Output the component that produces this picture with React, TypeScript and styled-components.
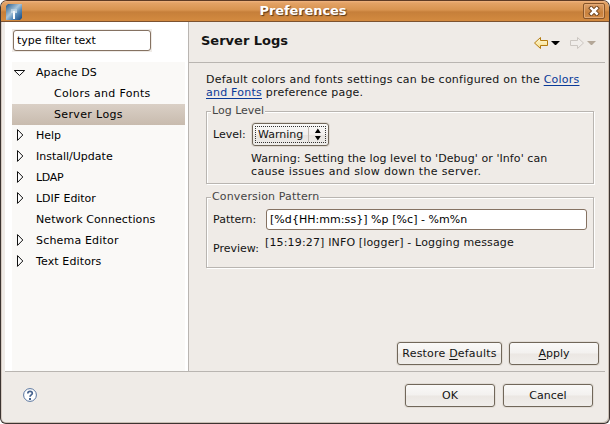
import React from "react";
import styled, { createGlobalStyle } from "styled-components";

const GlobalStyle = createGlobalStyle`
  *, *::before, *::after { box-sizing: border-box; }
  body { margin: 0; background: #fff; overflow: hidden; }
  button, input { font: inherit; color: inherit; }
`;

const Window = styled.div`
  width: 610px;
  height: 424px;
  display: flex;
  flex-direction: column;
  border: 1px solid #3c3431;
  border-top-color: #5e3b25;
  border-radius: 7px 7px 6px 6px;
  overflow: hidden;
  background: #efebe7;
  color: #141414;
  font: 11px/13px "DejaVu Sans", sans-serif;
  white-space: nowrap;
  box-shadow: inset -1px -1px #c9beb4, inset 1px 0 #d5cac2;
`;

const TitleBar = styled.header`
  height: 21px;
  flex: none;
  display: grid;
  grid-template-columns: 28px 1fr 28px;
  align-items: center;
  border-bottom: 1px solid #7c5230;
  background: linear-gradient(#f0b581 0, #e3a265 2px, #d8934f 9px, #c67f3a 11px, #d2893f 19px);
`;

const AppIcon = styled.svg`
  display: block;
  margin: 2px 0 0 5px;
`;

const WindowTitle = styled.h1`
  margin: 0;
  padding-right: 4px;
  text-align: center;
  font-size: 13px;
  line-height: 18px;
  font-weight: bold;
  letter-spacing: -0.1px;
  color: #fff;
  text-shadow: 1px 1px 1px #563719;
`;

const CloseButton = styled.button`
  width: 22px;
  height: 16px;
  margin-left: 2px;
  padding: 0;
  border: 1px solid #87552a;
  border-radius: 2px;
  background: linear-gradient(#dda16c, #c8813d 60%, #d38d4a);
  box-shadow: inset 0 0 0 1px #e3aa76;
  svg { display: block; margin: auto; }
`;

const Content = styled.div`
  height: 349px;
  flex: none;
  margin: 0 4px;
  display: grid;
  grid-template-columns: 183px 1fr;
`;

const Sidebar = styled.aside`
  background: #fff;
  padding: 7px 3px 0 7px;
  display: flex;
  flex-direction: column;
`;

const FilterFrame = styled.div`
  width: 140px;
  height: 23px;
  padding: 1px;
  background: #efebe7;
`;

const Field = styled.input<{ $tracking?: number }>`
  display: block;
  width: 100%;
  height: 21px;
  padding: 0 3px 1px;
  outline: 0;
  border: 1px solid #857262;
  border-radius: 3px;
  background: #fff;
  color: #000;
  letter-spacing: ${(p) => p.$tracking ?? 0}px;
`;

const Tree = styled.div`
  margin-top: 10px;
  flex: 1;
  background: #faf9f7;
`;

const TreeRow = styled.div<{ $selected?: boolean; $child?: boolean }>`
  height: 21px;
  display: grid;
  grid-template-columns: ${(p) => (p.$child ? 42 : 24)}px 1fr;
  align-items: center;
  color: #000;
  background: ${(p) => (p.$selected ? "linear-gradient(#dad0c6, #c8bbae)" : "none")};
  svg { display: block; }
`;

const Txt = styled.span<{ $tracking?: number }>`
  letter-spacing: ${(p) => p.$tracking ?? 0}px;
`;

const Page = styled.main`
  display: flex;
  flex-direction: column;
  border-left: 1px solid #b9b5b1;
`;

const PageHeader = styled.div`
  height: 41px;
  flex: none;
  display: flex;
  justify-content: space-between;
  padding: 11px 7px 0 12px;
  border-bottom: 1px solid #b9b5b1;
`;

const PageTitle = styled.h2`
  margin: 0;
  font-size: 13px;
  line-height: 16px;
  font-weight: bold;
`;

const Nav = styled.nav`
  width: 67px;
  height: 18px;
  svg { display: block; }
`;

const PageBody = styled.div`
  display: flex;
  flex-direction: column;
  padding: 10px 6px 0 17px;
`;

const Intro = styled.p`
  margin: 0;
  height: 38px;
`;

const Link = styled.a`
  color: #0a3a98;
  text-decoration: underline;
  text-underline-offset: 2px;
`;

const Group = styled.section<{ $height: number }>`
  width: 388px;
  height: ${(p) => p.$height}px;
  padding: 0 6px;
  border: 1px solid #b9b5b1;
  box-shadow: inset 1px 1px #fff, 1px 1px #fff;
  & + & { margin-top: 13px; }
`;

const GroupTitle = styled.h3<{ $tracking?: number }>`
  width: max-content;
  height: 13px;
  margin: -8px 0 0 -2px;
  padding: 0 1px;
  font-size: 11px;
  line-height: 13px;
  font-weight: normal;
  letter-spacing: ${(p) => p.$tracking ?? 0}px;
  color: #454545;
  background: #efebe7;
`;

const FormRow = styled.div<{ $label: number; $top: number }>`
  display: grid;
  grid-template-columns: ${(p) => p.$label}px 1fr;
  align-items: center;
  margin-top: ${(p) => p.$top}px;
`;

const Combo = styled.button`
  width: 77px;
  height: 23px;
  padding: 2px;
  border: 1px solid #71675a;
  border-radius: 3px;
  background: linear-gradient(#faf9f8, #f2efed 50%, #e8e4e0 52%, #efedea);
  box-shadow: 0 0 0 1px #dfd9d2;
`;

const ComboFocus = styled.span`
  height: 17px;
  display: flex;
  align-items: center;
  border: 1px dotted #333;
  padding-left: 2px;
`;

const ComboValue = styled.span`
  width: 52px;
  height: 15px;
  line-height: 15px;
  text-align: left;
  border-right: 1px solid #c2bbb4;
`;

const Note = styled.p`
  margin: 6px 0 0 38px;
`;

const Preview = styled.div`
  display: grid;
  grid-template-columns: 52px 1fr;
  margin-top: 6px;
  & > :first-child { padding-top: 6px; }
`;

const Actions = styled.div<{ $top: number }>`
  display: flex;
  justify-content: flex-end;
  gap: ${(p) => (p.$top ? 7 : 8)}px;
  margin-top: ${(p) => p.$top}px;
`;

const Button = styled.button<{ $width: number; $tracking?: number }>`
  width: ${(p) => p.$width}px;
  height: 23px;
  padding: 0 0 1px;
  border: 1px solid #71675a;
  border-radius: 3px;
  background: linear-gradient(#faf9f8, #f3f1ef 48%, #ebe7e3 52%, #f0eeeb);
  box-shadow: 0 0 0 1px #e2ddd7;
  letter-spacing: ${(p) => p.$tracking ?? 0}px;
  u { text-underline-offset: 2px; }
`;

const Footer = styled.footer`
  flex: 1;
  margin: 0 4px;
  padding: 12px 12px 0 18px;
  display: flex;
  justify-content: space-between;
  align-items: flex-start;
  border-top: 1px solid #b9b5b1;
  & > svg { margin-top: 4px; }
`;

type TreeItem = { label: string; kind: "open" | "closed" | "leaf"; child?: boolean; selected?: boolean; tracking?: number };

const items: TreeItem[] = [
  { label: "Apache DS", kind: "open", tracking: 0.1 },
  { label: "Colors and Fonts", kind: "leaf", child: true, tracking: 0.3 },
  { label: "Server Logs", kind: "leaf", child: true, selected: true, tracking: 0.36 },
  { label: "Help", kind: "closed" },
  { label: "Install/Update", kind: "closed" },
  { label: "LDAP", kind: "closed", tracking: -0.3 },
  { label: "LDIF Editor", kind: "closed", tracking: -0.04 },
  { label: "Network Connections", kind: "leaf", tracking: 0.1 },
  { label: "Schema Editor", kind: "closed", tracking: 0.18 },
  { label: "Text Editors", kind: "closed", tracking: 0.12 },
];

const Expander = ({ kind }: { kind: TreeItem["kind"] }) => (
  <svg width="16" height="16" fill="#fff" stroke="#111" strokeWidth="1">
    {kind === "open" && <path d="M2.3 5.5H12.7L7.5 10.5Z" />}
    {kind === "closed" && <path d="M5.5 1.6V12.4L10.8 7Z" />}
  </svg>
);

export default function App() {
  return (
    <>
      <GlobalStyle />
      <Window>
        <TitleBar>
          <AppIcon width="17" height="17" viewBox="0 0 17 17">
            <defs>
              <linearGradient id="sky" x1="0" y1="0" x2="1" y2="1">
                <stop offset="0" stopColor="#245889" />
                <stop offset=".45" stopColor="#a9c5da" />
                <stop offset=".65" stopColor="#578ab8" />
                <stop offset="1" stopColor="#12457f" />
              </linearGradient>
            </defs>
            <path d="M2 0H16V14L14 16H0V2Z" fill="url(#sky)" />
            <path d="M5 5H11V9H5Z" fill="#c4d9e6" opacity=".7" />
            <path d="M8 7V15" stroke="#fff" strokeWidth="2" />
            <path d="M5 8H11" stroke="#deebf3" opacity=".7" />
          </AppIcon>
          <WindowTitle>Preferences</WindowTitle>
          <CloseButton aria-label="Close">
            <svg width="12" height="10" viewBox="0 0 12 10">
              <path d="M3.3 2.3L8.7 7.7M8.7 2.3L3.3 7.7" stroke="#704521" strokeWidth="4.4" strokeLinecap="square" />
              <path d="M3.3 2.3L8.7 7.7M8.7 2.3L3.3 7.7" stroke="#fff" strokeWidth="2.5" strokeLinecap="square" />
            </svg>
          </CloseButton>
        </TitleBar>

        <Content>
          <Sidebar>
            <FilterFrame><Field aria-label="Filter" defaultValue="type filter text" /></FilterFrame>
            <Tree>
              {items.map((i) => (
                <TreeRow key={i.label} $child={i.child} $selected={i.selected}>
                  <Expander kind={i.kind} />
                  <Txt $tracking={i.tracking}>{i.label}</Txt>
                </TreeRow>
              ))}
            </Tree>
          </Sidebar>

          <Page>
            <PageHeader>
              <PageTitle>Server Logs</PageTitle>
              <Nav>
                <svg width="67" height="18">
                  <defs>
                    <linearGradient id="gold" x1="0" y1="0" x2="0" y2="1">
                      <stop offset="0" stopColor="#fffbe0" />
                      <stop offset="1" stopColor="#f7dc83" />
                    </linearGradient>
                  </defs>
                  <path d="M3.5 10L9.5 4.5V7.5H16.5V12.5H9.5V15.5Z" fill="url(#gold)" stroke="#b47b10" />
                  <path d="M20 8H29L25 12H24Z" fill="#000" />
                  <path d="M52.5 10L46.5 4.5V7.5H39.5V12.5H46.5V15.5Z" fill="#f0edea" stroke="#cbc6c1" />
                  <path d="M56 8H65L61 12H60Z" fill="#b4a798" />
                </svg>
              </Nav>
            </PageHeader>

            <PageBody>
              <Intro>
                <Txt $tracking={0.23}>Default colors and fonts settings can be configured on the <Link>Colors</Link></Txt><br />
                <Txt $tracking={0.23}><Link>and Fonts</Link> preference page.</Txt>
              </Intro>
              <Group $height={73}>
                <GroupTitle>Log Level</GroupTitle>
                <FormRow $label={39} $top={6}>
                  <Txt>Level:</Txt>
                  <Combo>
                    <ComboFocus>
                      <ComboValue>Warning</ComboValue>
                      <svg width="16" height="13" viewBox="0 0 16 13">
                        <path d="M9 0.5L12 5H6ZM6 8H12L9 12.5Z" fill="#000" />
                      </svg>
                    </ComboFocus>
                  </Combo>
                </FormRow>
                <Note>
                  <Txt $tracking={0.08}>Warning: Setting the log level to 'Debug' or 'Info' can</Txt><br />
                  <Txt $tracking={0.34}>cause issues and slow down the server.</Txt>
                </Note>
              </Group>
              <Group $height={71}>
                <GroupTitle $tracking={0.15}>Conversion Pattern</GroupTitle>
                <FormRow $label={53} $top={6}>
                  <Txt>Pattern:</Txt>
                  <Field aria-label="Pattern" $tracking={0.05} defaultValue="[%d{HH:mm:ss}] %p [%c] - %m%n" />
                </FormRow>
                <Preview>
                  <Txt>Preview:</Txt>
                  <Txt $tracking={0.15}>[15:19:27] INFO [logger] - Logging message</Txt>
                </Preview>
              </Group>
              <Actions $top={74}>
                <Button $width={105} $tracking={0.2}>Restore <u>D</u>efaults</Button>
                <Button $width={90}><u>A</u>pply</Button>
              </Actions>
            </PageBody>
          </Page>
        </Content>

        <Footer>
          <svg width="15" height="15" viewBox="0 0 15 15" fill="none">
            <circle cx="7" cy="7" r="6.4" fill="#fff" stroke="#58749e" />
            <path d="M4.8 5.5C4.8 2.6 9.3 2.7 9.3 5.2C9.3 6.9 7 6.8 7 8.8" stroke="#47638e" strokeWidth="1.7" />
            <path d="M6 10H8V12H6Z" fill="#47638e" />
          </svg>
          <Actions $top={0}>
            <Button $width={90}>OK</Button>
            <Button $width={90}>Cancel</Button>
          </Actions>
        </Footer>
      </Window>
    </>
  );
}
